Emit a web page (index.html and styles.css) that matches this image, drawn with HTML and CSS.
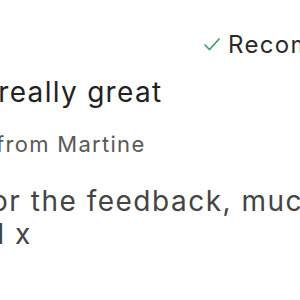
FILE: index.html
```html
<!DOCTYPE html>
<html>
<head>
<meta charset="utf-8">
<link rel="stylesheet" href="styles.css">
</head>
<body>
<div class="review">
  <div class="status">
    <svg class="check" width="18" height="14" viewBox="0 0 18 14"><path d="M1.5 7.5 L6.5 12.5 L16.5 1.5" fill="none" stroke="#3f9d62" stroke-width="1.6"/></svg>
    <span class="status-text">Recommended</span>
  </div>
  <div class="title"><span class="cut-title">is really great</span></div>
  <div class="meta"><span class="cut-meta">from Martine</span></div>
  <div class="reply">
    <div class="line"><span class="cut-reply1">for the feedback, much</span></div>
    <div class="line"><span class="cut-reply2">d x</span></div>
  </div>
</div>
</body>
</html>
```
FILE: styles.css
```css
html, body {
  margin: 0;
  padding: 0;
  background: #ffffff;
  overflow: hidden;
  width: 300px;
  height: 300px;
}
.review {
  font-family: Inter, "Noto Sans", sans-serif;
  white-space: nowrap;
  overflow: hidden;
  width: 300px;
  height: 300px;
}
.status {
  display: flex;
  align-items: center;
  gap: 7px;
  padding: 31px 0 0 203px;
  height: 26px;
}
.check { flex: none; }
.status-text {
  font-size: 24px;
  letter-spacing: 1.3px;
  color: #2a2a2a;
}
.title {
  margin-top: 17px;
  font-size: 28px;
  line-height: 36px;
  letter-spacing: 1.3px;
  color: #222222;
}
.cut-title { margin-left: -35px; display: inline-block; }
.meta {
  margin-top: 20px;
  font-size: 22px;
  line-height: 28px;
  letter-spacing: 1.3px;
  color: #595959;
}
.cut-meta { margin-left: -4px; display: inline-block; }
.reply {
  margin-top: 27px;
  font-size: 28px;
  line-height: 33px;
  letter-spacing: 1.5px;
  color: #444444;
}
.cut-reply1 { margin-left: -20px; display: inline-block; }
.cut-reply2 { margin-left: -13px; display: inline-block; }
```
